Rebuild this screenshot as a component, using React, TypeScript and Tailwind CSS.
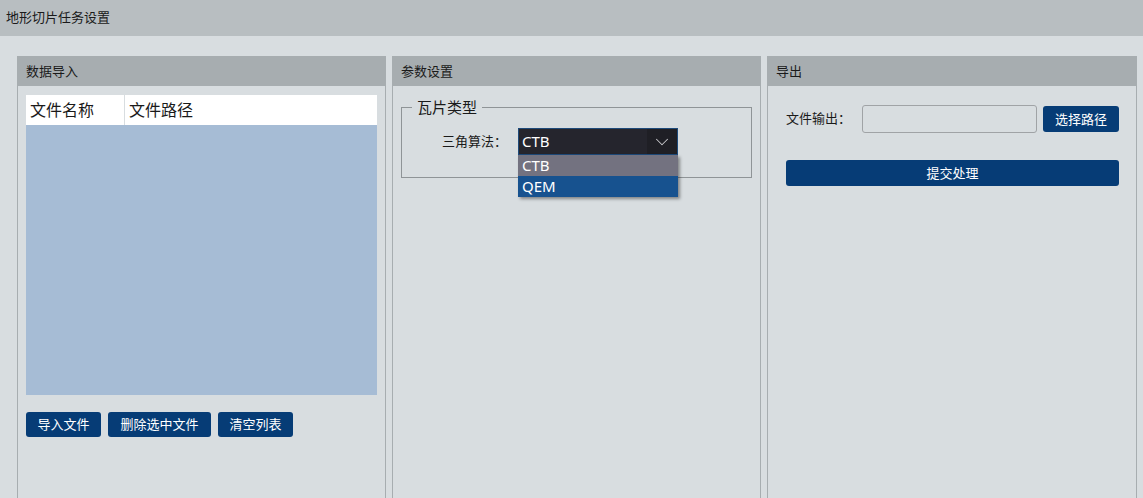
import { ChevronDown } from 'lucide-react';

const font = { fontFamily: '"Noto Sans", "Noto Sans CJK SC", sans-serif' };

function PanelHeader({ title }: { title: string }) {
  return (
    <div className="h-[30px] bg-[#a7adb0] pl-[9px] text-[13px] leading-[30px] text-[#1a1a1a]">
      {title}
    </div>
  );
}

function Btn({ label, className = '' }: { label: string; className?: string }) {
  return (
    <button className={`h-[25px] shrink-0 whitespace-nowrap rounded-[3px] bg-[#063c76] text-[13px] leading-[25px] text-white ${className}`}>
      {label}
    </button>
  );
}

export default function App() {
  return (
    <div className="h-[498px] overflow-hidden bg-[#d8dde0] text-[#1a1a1a]" style={font}>
      <div className="h-[36px] bg-[#b8bec1] pl-[6px] text-[13px] leading-[34px]">地形切片任务设置</div>

      <div className="grid grid-cols-[369px_369px_370px] gap-[6px] pl-[17px] pt-[20px]">
        {/* 数据导入 */}
        <div className="h-[460px]">
          <PanelHeader title="数据导入" />
          <div className="h-full border-x border-[#a7adb0] px-[8px] pt-[9px]">
            <div className="flex h-[30px] bg-white text-[16px] leading-[30px]">
              <div className="w-[99px] border-r border-[#d8dde0] pl-[4px]">文件名称</div>
              <div className="pl-[4px]">文件路径</div>
            </div>
            <div className="h-[270px] bg-[#a6bcd5]" />
            <div className="mt-[17px] flex gap-[7px]">
              <Btn label="导入文件" className="w-[75px]" />
              <Btn label="删除选中文件" className="w-[103px]" />
              <Btn label="清空列表" className="w-[75px]" />
            </div>
          </div>
        </div>

        {/* 参数设置 */}
        <div className="h-[460px]">
          <PanelHeader title="参数设置" />
          <div className="h-full border-x border-[#a7adb0] px-[8px] pt-[11px]">
            <fieldset className="border border-[#8f9497] px-0 pb-[22px]">
              <legend className="ml-[10px] px-[5px] text-[15px] leading-[20px]">瓦片类型</legend>
              <div className="mt-[11px] flex items-center pl-[40px]">
                <span className="w-[76px] shrink-0 text-[13px]">三角算法：</span>
                <div className="relative w-[160px]">
                  <div className="flex h-[27px] items-center border border-[#1e4a7a] bg-[#25252d]">
                    <span className="flex-1 pl-[3px] text-[15px] leading-[25px] text-white">CTB</span>
                    <span className="flex h-full w-[30px] items-center justify-center bg-[#1f1f25]">
                      <ChevronDown size={22} strokeWidth={1.1} className="text-[#c8c8cc]" />
                    </span>
                  </div>
                  <div className="absolute left-0 top-[27px] z-10 w-full shadow-[2px_2px_3px_rgba(0,0,0,0.4)]">
                    <div className="h-[21px] bg-[#737280] pl-[4px] text-[15px] leading-[21px] text-white">CTB</div>
                    <div className="h-[21px] bg-[#17528f] pl-[4px] text-[15px] leading-[21px] text-white">QEM</div>
                  </div>
                </div>
              </div>
            </fieldset>
          </div>
        </div>

        {/* 导出 */}
        <div className="h-[460px]">
          <PanelHeader title="导出" />
          <div className="h-full border-x border-[#a7adb0] pl-[18px] pr-[17px] pt-[19px]">
            <div className="flex items-center">
              <span className="w-[76px] shrink-0 whitespace-nowrap text-[13px]">文件输出：</span>
              <input className="h-[28px] w-0 min-w-0 flex-1 rounded-[3px] border border-[#a0a3a6] bg-[#d8dde0] outline-none" />
              <Btn label="选择路径" className="ml-[6px] h-[26px] w-[76px] leading-[26px]" />
            </div>
            <Btn label="提交处理" className="mt-[27px] h-[26px] w-full leading-[26px]" />
          </div>
        </div>
      </div>
    </div>
  );
}
